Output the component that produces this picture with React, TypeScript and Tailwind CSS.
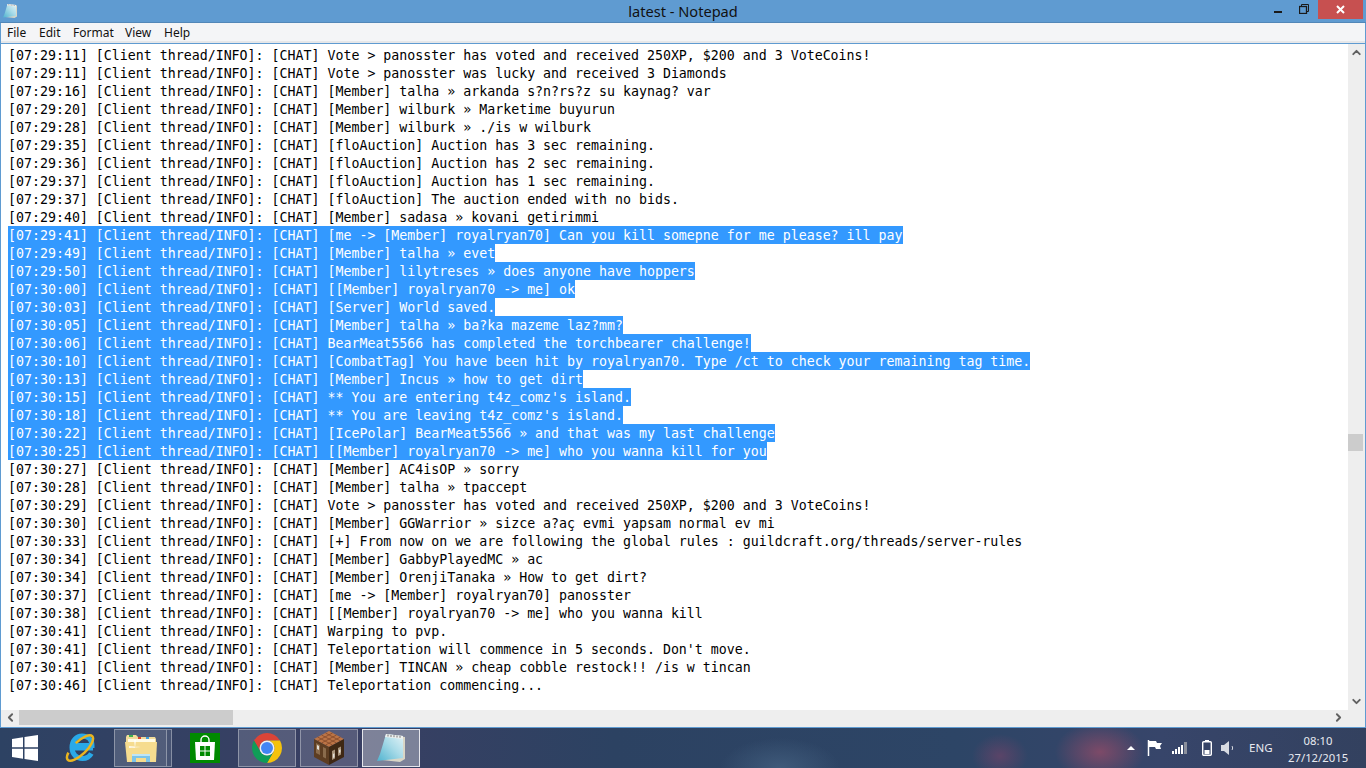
import { ChevronDown, ChevronLeft, ChevronRight, ChevronUp } from "lucide-react";

const monoFont = "font-['DejaVu_Sans_Mono','Liberation_Mono',monospace]";
const uiFont = "font-['Noto_Sans','Open_Sans',sans-serif]";

// [time, message, selected]
const lines: [string, string, boolean?][] = [
  ["07:29:11", "Vote > panosster has voted and received 250XP, $200 and 3 VoteCoins!"],
  ["07:29:11", "Vote > panosster was lucky and received 3 Diamonds"],
  ["07:29:16", "[Member] talha » arkanda s?n?rs?z su kaynag? var"],
  ["07:29:20", "[Member] wilburk » Marketime buyurun"],
  ["07:29:28", "[Member] wilburk » ./is w wilburk"],
  ["07:29:35", "[floAuction] Auction has 3 sec remaining."],
  ["07:29:36", "[floAuction] Auction has 2 sec remaining."],
  ["07:29:37", "[floAuction] Auction has 1 sec remaining."],
  ["07:29:37", "[floAuction] The auction ended with no bids."],
  ["07:29:40", "[Member] sadasa » kovani getirimmi"],
  ["07:29:41", "[me -> [Member] royalryan70] Can you kill somepne for me please? ill pay", true],
  ["07:29:49", "[Member] talha » evet", true],
  ["07:29:50", "[Member] lilytreses » does anyone have hoppers", true],
  ["07:30:00", "[[Member] royalryan70 -> me] ok", true],
  ["07:30:03", "[Server] World saved.", true],
  ["07:30:05", "[Member] talha » ba?ka mazeme laz?mm?", true],
  ["07:30:06", "BearMeat5566 has completed the torchbearer challenge!", true],
  ["07:30:10", "[CombatTag] You have been hit by royalryan70. Type /ct to check your remaining tag time.", true],
  ["07:30:13", "[Member] Incus » how to get dirt", true],
  ["07:30:15", "** You are entering t4z_comz's island.", true],
  ["07:30:18", "** You are leaving t4z_comz's island.", true],
  ["07:30:22", "[IcePolar] BearMeat5566 » and that was my last challenge", true],
  ["07:30:25", "[[Member] royalryan70 -> me] who you wanna kill for you", true],
  ["07:30:27", "[Member] AC4isOP » sorry"],
  ["07:30:28", "[Member] talha » tpaccept"],
  ["07:30:29", "Vote > panosster has voted and received 250XP, $200 and 3 VoteCoins!"],
  ["07:30:30", "[Member] GGWarrior » sizce a?aç evmi yapsam normal ev mi"],
  ["07:30:33", "[+] From now on we are following the global rules : guildcraft.org/threads/server-rules"],
  ["07:30:34", "[Member] GabbyPlayedMC » ac"],
  ["07:30:34", "[Member] OrenjiTanaka » How to get dirt?"],
  ["07:30:37", "[me -> [Member] royalryan70] panosster"],
  ["07:30:38", "[[Member] royalryan70 -> me] who you wanna kill"],
  ["07:30:41", "Warping to pvp."],
  ["07:30:41", "Teleportation will commence in 5 seconds. Don't move."],
  ["07:30:41", "[Member] TINCAN » cheap cobble restock!! /is w tincan"],
  ["07:30:46", "Teleportation commencing..."],
];

function NotepadIcon({ size }: { size: number }) {
  return (
    <svg width={size} height={size} viewBox="0 0 32 32">
      <defs>
        <linearGradient id={`pad${size}`} x1="0" y1="1" x2="1" y2="0">
          <stop offset="0" stopColor="#4fb3cf" />
          <stop offset="0.55" stopColor="#a9dbe8" />
          <stop offset="1" stopColor="#e4f3f7" />
        </linearGradient>
      </defs>
      <polygon points="12,3 30,5 30,27 25,30 7,28" fill="#d9d6c6" />
      <polygon points="11,2 28,4 28,26 2,29 5,22" fill={`url(#pad${size})`} />
      <polygon points="11,2 28,4 28,7 10,5" fill="#eef0ee" />
      <path d="M13 2.500v2M16 3v2M19 3.200v2M22 3.500v2M25 3.800v2" stroke="#777" strokeWidth="1" />
    </svg>
  );
}

function ChromeIcon() {
  return (
    <svg width="30" height="30" viewBox="4 4 40 40">
      <path d="M41.320 14A20 20 0 0 0 6.680 14L15.340 29A10 10 0 0 1 24 14Z" fill="#db4437" />
      <path d="M24 44A20 20 0 0 0 41.320 14L24 14A10 10 0 0 1 32.660 29Z" fill="#f4c20d" />
      <path d="M6.680 14A20 20 0 0 0 24 44L32.660 29A10 10 0 0 1 15.340 29Z" fill="#0f9d58" />
      <circle cx="24" cy="24" r="10" fill="#f1f1f1" />
      <circle cx="24" cy="24" r="8" fill="#4285f4" />
    </svg>
  );
}

function IeIcon() {
  return (
    <svg width="32" height="32" viewBox="0 0 32 32">
      <path d="M8 13.500h19c0-6-4.500-9.500-10-9.500-5.500 0-10 4.500-10 11.500 0 6.500 4.500 11 10.500 11 4 0 7-1.800 8.800-5" fill="none" stroke="#29a9e8" strokeWidth="5" />
      <rect x="9" y="14" width="19" height="4.500" fill="#29a9e8" />
      <ellipse cx="15" cy="16" rx="17" ry="6.500" transform="rotate(-44 15 16)" fill="none" stroke="#e9b520" strokeWidth="2.500" strokeDasharray="46 12 40 0" />
    </svg>
  );
}

function FolderIcon() {
  return (
    <svg width="32" height="28" viewBox="0 0 32 28">
      <path d="M1 3l1-2h9l2 2h17l1 2v3H1z" fill="#f2dc9a" />
      <rect x="4" y="1" width="4" height="2" fill="#3fb24f" />
      <rect x="13" y="3" width="3" height="2" fill="#d9432f" />
      <rect x="21" y="3" width="3" height="2" fill="#3f9fdc" />
      <rect x="3" y="5" width="27" height="4" fill="#fffbe6" />
      <path d="M0 8h32l-1 20H2z" fill="#f6dc8f" />
      <path d="M7 28v-8h18v8h-4v-4H11v4z" fill="#7cc4ea" />
      <path d="M7 20h18v2H7z" fill="#bfe5f7" />
      <path d="M9 6l1 8 1-8zM4 12l12 1-12 1z" fill="#ffffff" opacity="0.8" />
    </svg>
  );
}

function TableIcon() {
  return (
    <svg width="30" height="34" viewBox="0 0 30 34">
      <polygon points="15,0 30,8 15,16 0,8" fill="#bb7446" />
      <path d="M7.500 4l15 8M11.500 2l15 8M3.500 6l15 8M22.500 4l-15 8M18.500 2l-15 8M26.500 6l-15 8" stroke="#84492a" strokeWidth="0.8" />
      <polygon points="0,8 15,16 15,34 0,26" fill="#5d3d22" />
      <polygon points="30,8 15,16 15,34 30,26" fill="#3f2814" />
      <path d="M2 12l4 2v10l-4-2zM9 16l3 1.500v10l-3-1.500z" fill="#8a6b4c" />
      <path d="M18 20l3-1.500v9l-3 1.500zM24 17l3-1.500v8l-3 1.500z" fill="#a8937a" />
      <path d="M3 14l2 1v4l-2-1zM19 23l1.500-.8v4l-1.500.8zM25 19l1.500-.8v3l-1.500.8z" fill="#e3e0d8" />
    </svg>
  );
}

function StoreIcon() {
  return (
    <div className="flex h-[30px] w-[30px] items-center justify-center bg-[#008a00]">
      <svg width="22" height="26" viewBox="0 0 22 26">
        <path d="M7 8V5a4 4 0 0 1 8 0v3" fill="none" stroke="#fff" strokeWidth="1.400" />
        <polygon points="1,7 21,7 20,25 2,25" fill="#fff" />
        <rect x="6" y="11" width="4.500" height="4.500" fill="#008a00" />
        <rect x="11.500" y="11" width="4.500" height="4.500" fill="#008a00" />
        <rect x="6" y="16.500" width="4.500" height="4.500" fill="#008a00" />
        <rect x="11.500" y="16.500" width="4.500" height="4.500" fill="#008a00" />
      </svg>
    </div>
  );
}

function TaskButton({ active, icon, stacked }: { active?: boolean; icon: React.ReactNode; stacked?: boolean }) {
  return (
    <div className="flex h-[38px]">
      <div
        className={
          active
            ? "flex h-full w-[58px] items-center justify-center border border-white/80 bg-white/35"
            : stacked
              ? "flex h-full w-[53px] items-center justify-center border border-white/35 bg-white/15"
              : "flex h-full w-[58px] items-center justify-center border border-white/35 bg-white/15"
        }
      >
        {icon}
      </div>
      {stacked ? <div className="h-full w-[5px] border border-l-0 border-white/35 bg-white/10" /> : null}
    </div>
  );
}

export default function App() {
  return (
    <div className="flex h-[768px] w-[1366px] flex-col overflow-hidden bg-white">
      <div className="flex h-[728px] flex-col border-x border-b border-[#5f9bd1]">
        {/* title bar */}
        <div className="-mx-px grid h-[23px] shrink-0 grid-cols-[1fr_auto_1fr] border-b border-[#5287b8] bg-[#5f9bd1]">
          <div className="flex items-start pl-[2px] pt-[3px]">
            <NotepadIcon size={16} />
          </div>
          <div className={`${uiFont} pt-px text-[14.6px] leading-[20px] text-[#111]`}>latest - Notepad</div>
          <div className="flex justify-end pr-[3px]">
            <div className="mr-[17px] mt-[11px] h-[2px] w-[8px] bg-[#1a1a1a]" />
            <svg className="mr-[9px] mt-[4px]" width="10" height="10" viewBox="0 0 10 10">
              <path d="M2.500 2V.5h7v7H8" fill="none" stroke="#1a1a1a" />
              <rect x="0.500" y="2.500" width="7" height="7" fill="none" stroke="#1a1a1a" strokeWidth="1.300" />
            </svg>
            <div className="flex h-[19px] w-[45px] items-center justify-center bg-[#c75050]">
              <svg width="9" height="9" viewBox="0 0 9 9">
                <path d="M1 1l7 7M8 1L1 8" stroke="#fff" strokeWidth="2" />
              </svg>
            </div>
          </div>
        </div>

        {/* menu bar */}
        <div className={`${uiFont} flex h-[18px] shrink-0 items-center gap-[14px] bg-[#f4f5f7] pl-[6px] pt-[2px] text-[12px] leading-[18px] text-[#111]`}>
          <span className="w-[18px]">File</span>
          <span className="w-[20px]">Edit</span>
          <span className="w-[38px]">Format</span>
          <span className="w-[25px]">View</span>
          <span className="w-[25px]">Help</span>
        </div>
        <div className="h-[2px] shrink-0 bg-[#e6e7e9]" />
        <div className="-mx-px h-px shrink-0 bg-[#5f9bd1]" />

        {/* text area + vertical scrollbar */}
        <div className="flex h-[666px] shrink-0">
          <div className={`${monoFont} flex-1 overflow-hidden pl-[7px] pt-[2px] text-[13.28px] text-black`}>
            {lines.map(([time, message, selected], i) => (
              <div key={i} className="h-[18px]">
                <span className={selected ? "inline-block h-[18px] overflow-hidden whitespace-pre bg-[#3399ff] leading-[20px] text-white" : "inline-block h-[18px] overflow-hidden whitespace-pre leading-[20px]"}>
                  {`[${time}] [Client thread/INFO]: [CHAT] ${message}`}
                </span>
              </div>
            ))}
          </div>
          <div className="flex w-[17px] shrink-0 flex-col bg-[#eeeeee]">
            <div className="flex h-[17px] items-center justify-center text-[#606060]">
              <ChevronUp size={13} strokeWidth={3.500} />
            </div>
            <div className="flex-1 pt-[373px]">
              <div className="h-[17px] w-[15px] bg-[#cccccc]" />
            </div>
            <div className="flex h-[17px] items-center justify-center text-[#606060]">
              <ChevronDown size={13} strokeWidth={3.500} />
            </div>
          </div>
        </div>

        {/* horizontal scrollbar */}
        <div className="flex h-[17px] shrink-0 bg-[#eeeeee]">
          <div className="flex h-[15px] w-[18px] items-center justify-center text-[#606060]">
            <ChevronLeft size={13} strokeWidth={3.500} />
          </div>
          <div className="h-[15px] w-[214px] bg-[#cccccc]" />
          <div className="flex h-[15px] flex-1 items-center justify-end pr-[20px] text-[#606060]">
            <ChevronRight size={13} strokeWidth={3.500} />
          </div>
        </div>
      </div>

      {/* taskbar */}
      <div className="flex h-[40px] shrink-0 items-center bg-[radial-gradient(ellipse_45px_30px_at_1100px_24px,#7d4a68,transparent),radial-gradient(ellipse_28px_22px_at_1000px_28px,#5a4468,transparent),radial-gradient(ellipse_60px_30px_at_780px_40px,#3f5a7a,transparent),linear-gradient(90deg,#2d4263_0%,#3a3f63_25%,#2c4262_45%,#2d4566_70%,#37456a_85%,#33415f_100%)]">
        <div className="flex w-[50px] justify-center">
          <svg width="26" height="26" viewBox="0 0 26 26">
            <polygon points="0,4 11,2.300 11,12.300 0,12.300" fill="#fff" />
            <polygon points="12.500,2 26,0 26,12.300 12.500,12.300" fill="#fff" />
            <polygon points="0,13.700 11,13.700 11,23.700 0,22" fill="#fff" />
            <polygon points="12.500,13.700 26,13.700 26,26 12.500,24" fill="#fff" />
          </svg>
        </div>
        <div className="ml-[15px] flex w-[32px] justify-center">
          <IeIcon />
        </div>
        <div className="ml-[17px]">
          <TaskButton stacked icon={<FolderIcon />} />
        </div>
        <div className="ml-[18px]">
          <StoreIcon />
        </div>
        <div className="ml-[18px]">
          <TaskButton icon={<ChromeIcon />} />
        </div>
        <div className="ml-[4px]">
          <TaskButton icon={<TableIcon />} />
        </div>
        <div className="ml-[4px]">
          <TaskButton active icon={<NotepadIcon size={32} />} />
        </div>

        {/* tray */}
        <div className="ml-auto flex items-center text-white">
          <div className="h-0 w-0 border-x-[4px] border-b-[4px] border-x-transparent border-b-white" />
          <svg className="ml-[12px]" width="16" height="16" viewBox="0 0 16 16">
            <path d="M1.500 0v16" stroke="#fff" strokeWidth="1.500" />
            <path d="M2 1h7l1 2h5l-2 3 1 3H9L8 7H2z" fill="#fff" />
          </svg>
          <svg className="ml-[9px]" width="16" height="12" viewBox="0 0 16 12">
            <rect x="0" y="9" width="2" height="3" fill="#fff" />
            <rect x="3" y="7" width="2" height="5" fill="#fff" />
            <rect x="6" y="5" width="2" height="7" fill="#fff" />
            <rect x="9" y="3" width="2" height="9" fill="#fff" />
            <rect x="12" y="0" width="3" height="12" fill="#8a8f9c" />
          </svg>
          <svg className="ml-[14px]" width="10" height="16" viewBox="0 0 10 16">
            <rect x="3" y="0" width="4" height="1.500" fill="#fff" />
            <rect x="0.700" y="1.700" width="8.600" height="13.600" rx="1" fill="none" stroke="#fff" strokeWidth="1.400" />
            <rect x="2.500" y="10" width="5" height="4" fill="#fff" />
          </svg>
          <svg className="ml-[9px]" width="13" height="14" viewBox="0 0 13 14">
            <path d="M0 4h3l5-4v14l-5-4H0z" fill="#d8dbe2" />
            <path d="M11 5c.8 1.200.8 2.800 0 4" fill="none" stroke="#d8dbe2" />
          </svg>
          <div className={`${uiFont} ml-[15px] w-[24px] text-[11.500px] leading-none text-[#e8eaf0]`}>ENG</div>
          <div className={`${uiFont} ml-[15px] mr-[18px] w-[60px] whitespace-nowrap pt-[2px] text-center text-[11.300px] leading-[17px] text-[#e8eaf0]`}>
            <div>08:10</div>
            <div>27/12/2015</div>
          </div>
        </div>
      </div>
    </div>
  );
}
